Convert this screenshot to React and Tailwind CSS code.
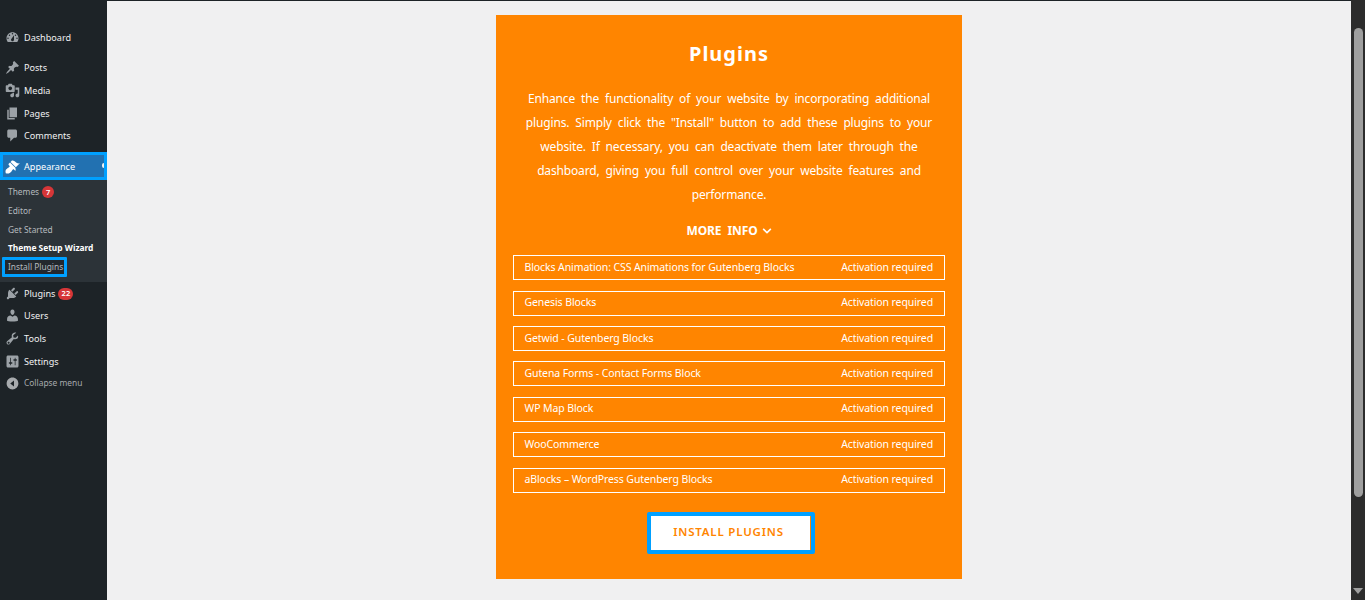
import { FaChevronDown } from 'react-icons/fa';

const sans = 'font-["Noto_Sans",sans-serif]';

// wp admin menu glyphs
const icons = {
  dashboard: 'M3.76 16h12.48c1.100-1.370 1.760-3.110 1.760-5 0-4.420-3.580-8-8-8s-8 3.580-8 8c0 1.890.66 3.630 1.760 5zM10 4c.55 0 1 .45 1 1s-.45 1-1 1-1-.45-1-1 .45-1 1-1zM6 6c.55 0 1 .45 1 1s-.45 1-1 1-1-.45-1-1 .45-1 1-1zm8 0c.55 0 1 .45 1 1s-.45 1-1 1-1-.45-1-1 .45-1 1-1zm-5.370 5.550L12 7v6c0 1.100-.9 2-2 2s-2-.9-2-2c0-.57.24-1.080.63-1.450zM4 10c.55 0 1 .45 1 1s-.45 1-1 1-1-.45-1-1 .45-1 1-1zm12 0c.55 0 1 .45 1 1s-.45 1-1 1-1-.45-1-1 .45-1 1-1z',
  posts: 'M10.440 3.020l1.820-1.820 6.360 6.350-1.830 1.820c-1.050-.68-2.480-.57-3.410.36l-.75.75c-.92.93-1.040 2.350-.35 3.410l-1.830 1.820-2.410-2.410-2.800 2.790c-.42.42-3.380 2.710-3.800 2.290s1.860-3.390 2.280-3.810l2.790-2.790L4.100 9.360l1.830-1.820c1.050.69 2.480.57 3.400-.36l.75-.75c.93-.92 1.050-2.350.36-3.410z',
  media: 'M13 11V4c0-.55-.45-1-1-1h-1.670L9 1H5L3.670 3H2c-.55 0-1 .45-1 1v7c0 .55.45 1 1 1h10c.55 0 1-.45 1-1zM7 4.500c1.380 0 2.500 1.120 2.500 2.500S8.380 9.500 7 9.500 4.500 8.380 4.500 7 5.620 4.500 7 4.500zM14 6h5v10.500c0 1.380-1.120 2.500-2.500 2.500S14 17.880 14 16.500s1.120-2.500 2.500-2.500c.17 0 .34.020.5.050V9h-3V6zm-4 8.050V13h2v3.500c0 1.380-1.120 2.500-2.500 2.500S7 17.880 7 16.500 8.120 14 9.500 14c.17 0 .34.020.5.050z',
  pages: 'M6 15V2h10v13H6zm-1 1h8v2H3V5h2v11z',
  comments: 'M5 2h9c1.100 0 2 .9 2 2v7c0 1.100-.9 2-2 2h-2l-5 5v-5H5c-1.100 0-2-.9-2-2V4c0-1.100.9-2 2-2z',
  appearance: 'M14.480 11.060L7.410 3.990l1.500-1.500c.5-.56 2.300-.47 3.510.32 1.210.8 1.430 1.280 2.910 2.100 1.180.64 2.450 1.260 4.450.85zm-.71.71L6.700 4.700 4.930 6.470c-.39.39-.39 1.020 0 1.410l1.060 1.060c.39.39.39 1.030 0 1.420-.6.6-1.430 1.110-2.210 1.690-.35.26-.7.53-1.010.84C1.430 13.230 0 15 1 19c4 1 5.770-.43 6.950-1.820.31-.31.58-.66.84-1.010.58-.78 1.090-1.610 1.690-2.210.39-.39 1.030-.39 1.420 0l1.060 1.060c.39.39 1.020.39 1.410 0z',
  plugins: 'M13.110 4.360L9.870 7.600 8 5.730l3.240-3.240c.35-.34 1.050-.2 1.560.32.52.51.66 1.210.31 1.550zm-8 1.770l.91-1.120 9.010 9.010-1.190.84c-.71.71-2.630 1.160-3.820 1.160H6.140L4.900 17.260c-.59.59-1.540.59-2.120 0-.59-.58-.59-1.530 0-2.120l1.240-1.240v-3.880c0-1.130.4-3.050 1.090-3.890zm7.260 3.970l3.240-3.240c.34-.35 1.040-.21 1.550.31.52.51.66 1.210.31 1.560l-3.240 3.250z',
  users: 'M10 9.250c-2.270 0-2.730-3.440-2.730-3.440C7 4.020 7.820 2 9.960 2c2.160 0 2.980 2.020 2.710 3.810 0 0-.4 3.440-2.670 3.440zm0 2.570L12.720 10c2.390 0 4.520 2.330 4.520 4.530v2.490s-3.650 1.130-7.240 1.130c-3.650 0-7.240-1.130-7.240-1.130v-2.490c0-2.250 1.940-4.480 4.470-4.480z',
  tools: 'M16.680 9.770c-1.340 1.340-3.300 1.670-4.950.99l-5.410 6.520c-.99.99-2.590.99-3.570 0-.99-.98-.99-2.580 0-3.570l6.520-5.420c-.68-1.650-.35-3.610.99-4.950 1.280-1.280 3.120-1.640 4.720-1.110L10.880 5.790l.5 2.830 2.830.5 3.080-3.100c.53 1.600.17 3.440-1.110 4.720zM3.810 16.610c.56.56 1.470.56 2.020 0 .56-.55.56-1.460 0-2.020-.55-.55-1.460-.55-2.020 0-.55.56-.55 1.470 0 2.020z',
  settings: 'M18 16V4c0-1.100-.9-2-2-2H4c-1.100 0-2 .9-2 2v12c0 1.100.9 2 2 2h12c1.100 0 2-.9 2-2zM8 11h1c.55 0 1 .45 1 1s-.45 1-1 1H8v1.500c0 .28-.22.5-.5.5s-.5-.22-.5-.5V13H6c-.55 0-1-.45-1-1s.45-1 1-1h1V5.500c0-.28.22-.5.5-.5s.5.22.5.5V11zm5-2h-1c-.55 0-1-.45-1-1s.45-1 1-1h1V5.500c0-.28.22-.5.5-.5s.5.22.5.5V7h1c.55 0 1 .45 1 1s-.45 1-1 1h-1v5.500c0 .28-.22.5-.5.5s-.5-.22-.5-.5V9z',
  collapse: 'M10 2.160c4.330 0 7.840 3.510 7.840 7.840s-3.510 7.840-7.840 7.840S2.160 14.330 2.160 10 5.670 2.160 10 2.160zM12 14V6l-5 4z',
};

function WpIcon({ name, size = 15 }) {
  return (
    <svg width={size} height={size} viewBox="0 0 20 20" fill="currentColor" fillRule="evenodd">
      <path d={icons[name]} />
    </svg>
  );
}

function MenuRow({ icon, label, badge, className = '' }) {
  return (
    <div className={`flex h-[23px] items-center text-[9.100px] text-[#f0f0f1] ${className}`}>
      <span className="flex w-[24px] justify-center text-[#9ca2a7]"><WpIcon name={icon} /></span>
      <span>{label}</span>
      {badge && (
        <span className="ml-[3px] flex h-[12px] min-w-[15px] items-center justify-center rounded-full bg-[#d63638] px-[3px] text-[7.500px] font-semibold text-white">
          {badge}
        </span>
      )}
    </div>
  );
}

function SubRow({ children, className = '' }) {
  return <div className={`flex h-[18.800px] items-center pl-[8px] text-[8.400px] text-[#b4b9be] ${className}`}>{children}</div>;
}

function Sidebar() {
  return (
    <aside className={`h-[600px] w-[107px] shrink-0 bg-[#1d2327] pt-[26px] ${sans}`}>
      <MenuRow icon="dashboard" label="Dashboard" />
      <div className="mt-[7px]">
        <MenuRow icon="posts" label="Posts" />
        <MenuRow icon="media" label="Media" />
        <MenuRow icon="pages" label="Pages" />
        <MenuRow icon="comments" label="Comments" className="-mt-[1px]" />
      </div>
      <div className="relative mt-[5px] flex h-[28px] items-center border-[3px] border-[#00a0ff] bg-[#2271b1] pt-[1px] text-[9.100px] text-white">
        <span className="mr-[3px] flex w-[18px] justify-center"><WpIcon name="appearance" /></span>
        <span>Appearance</span>
        <span className="absolute top-[8px] right-[0px] h-[5px] w-[2px] rounded-l-full bg-[#f0f0f1]" />
      </div>
      <div className="h-[102px] bg-[#2c3338] pt-[3px]">
        <SubRow>
          Themes
          <span className="ml-[3px] flex h-[12px] w-[12px] items-center justify-center rounded-full bg-[#d63638] text-[7.500px] font-semibold text-white">7</span>
        </SubRow>
        <SubRow>Editor</SubRow>
        <SubRow>Get Started</SubRow>
        <SubRow className="font-bold text-white">Theme Setup Wizard</SubRow>
        <div className="-mt-[1px] ml-[2px] flex h-[20px] w-[65px] items-center rounded-[1px] border-[3px] border-[#00a0ff] bg-[#23282d] pl-[3px] text-[8.400px] whitespace-nowrap text-[#b4b9be]">
          Install Plugins
        </div>
      </div>
      <MenuRow icon="plugins" label="Plugins" badge="22" />
      <MenuRow icon="users" label="Users" className="-mt-[1px]" />
      <MenuRow icon="tools" label="Tools" />
      <MenuRow icon="settings" label="Settings" />
      <div className="flex h-[21px] items-center text-[8.400px] text-[#a7aaad]">
        <span className="flex w-[24px] justify-center"><WpIcon name="collapse" /></span>
        Collapse menu
      </div>
    </aside>
  );
}

const plugins = [
  'Blocks Animation: CSS Animations for Gutenberg Blocks',
  'Genesis Blocks',
  'Getwid - Gutenberg Blocks',
  'Gutena Forms - Contact Forms Block',
  'WP Map Block',
  'WooCommerce',
  'aBlocks – WordPress Gutenberg Blocks',
];

function PluginsCard() {
  return (
    <section className={`h-[564px] w-[466px] bg-[#ff8500] px-[17px] pt-[26px] text-white ${sans}`}>
      <h1 className="text-center text-[20px] leading-[26px] font-bold tracking-[1px]">Plugins</h1>
      <p className="mt-[20px] px-[8px] text-center text-[12px] leading-[24px] tracking-[-0.160px] [word-spacing:3px]">
        Enhance the functionality of your website by incorporating additional plugins. Simply click the "Install" button to add these plugins to your website. If necessary, you can deactivate them later through the dashboard, giving you full control over your website features and performance.
      </p>
      <div className="mt-[14px] flex h-[20px] items-center justify-center gap-[4px] text-[12px] font-bold tracking-[-0.1px] [word-spacing:3px]">
        MORE INFO
        <FaChevronDown size={10} />
      </div>
      <ul className="mt-[14.300px] flex flex-col gap-[10.400px]">
        {plugins.map((name) => (
          <li key={name} className="flex h-[25px] items-center justify-between border border-white pr-[11px] pl-[10.500px] text-[10.500px] tracking-[-0.1px]">
            <span>{name}</span>
            <span>Activation required</span>
          </li>
        ))}
      </ul>
      <div className="mt-[19.700px] ml-[4px] flex justify-center">
        <button className="flex h-[42px] w-[168px] items-center justify-center rounded-[2px] border-[4px] border-[#00a0ff] bg-white pr-[5px] pb-[4px] text-[11.500px] font-semibold tracking-[0.800px] text-[#ff8500] shadow-[inset_-1px_0_0_#ff8500]">
          INSTALL PLUGINS
        </button>
      </div>
    </section>
  );
}

function Scrollbar() {
  return (
    <div className="flex h-[600px] w-[14px] shrink-0 flex-col items-center bg-[#2c2c2c] pt-[28px]">
      <div className="h-[469px] w-[9px] rounded-[5px] bg-[#9f9f9f]" />
      <svg className="mt-[91px]" width="10" height="6" viewBox="0 0 10 6" fill="#9f9f9f"><path d="M0 0h10L5 6z" /></svg>
    </div>
  );
}

export default function App() {
  return (
    <div className="flex h-[600px] w-[1365px] overflow-hidden bg-[#f0f0f1]">
      <Sidebar />
      <main className="flex min-w-0 flex-1 justify-center border-t border-[#1d2327] pt-[14px]">
        <PluginsCard />
      </main>
      <Scrollbar />
    </div>
  );
}
